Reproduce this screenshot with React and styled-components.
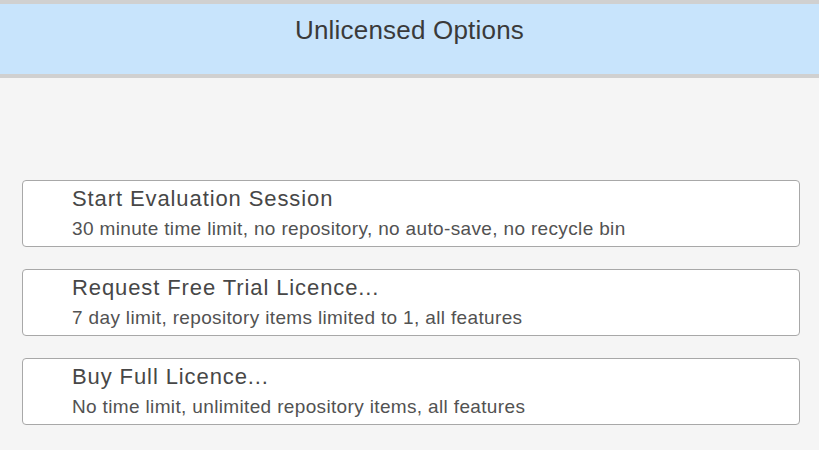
import styled, { createGlobalStyle } from 'styled-components'

const options = [
    { title: 'Start Evaluation Session', detail: '30 minute time limit, no repository, no auto-save, no recycle bin' },
    { title: 'Request Free Trial Licence...', detail: '7 day limit, repository items limited to 1, all features' },
    { title: 'Buy Full Licence...', detail: 'No time limit, unlimited repository items, all features' },
]

function App() {
    return (
        <>
            <GlobalStyle />
            <Page>
                <Header>Unlicensed Options</Header>
                <OptionList>
                    {options.map((option) => (
                        <OptionButton key={option.title} type='button'>
                            <OptionTitle>{option.title}</OptionTitle>
                            <OptionDetail>{option.detail}</OptionDetail>
                        </OptionButton>
                    ))}
                </OptionList>
            </Page>
        </>
    )
}

const GlobalStyle = createGlobalStyle`
    html, body {
        margin: 0;
        padding: 0;
        background: #f5f5f5;
        font-family: "Liberation Sans", Arial, sans-serif;
    }
`

const Page = styled.div`
    width: 819px;
    height: 450px;
    background: #f5f5f5;
    overflow: hidden;
`

const Header = styled.div`
    box-sizing: border-box;
    height: 78px;
    border-top: 4px solid #d0d0d0;
    border-bottom: 4px solid #d0d0d0;
    background: #c8e4fc;
    color: #3a3a3a;
    font-size: 26px;
    letter-spacing: 0.2px;
    line-height: 52px;
    text-align: center;
`

const OptionList = styled.div`
    display: flex;
    flex-direction: column;
    gap: 22px;
    padding: 102px 19px 0 22px;
`

const OptionButton = styled.button`
    box-sizing: border-box;
    display: flex;
    flex-direction: column;
    align-items: flex-start;
    height: 67px;
    padding: 6px 0 0 49px;
    background: #ffffff;
    border: 1px solid #a8a8a8;
    border-radius: 4px;
    font-family: "Liberation Sans", Arial, sans-serif;
    text-align: left;
    cursor: pointer;
`

const OptionTitle = styled.span`
    font-size: 22px;
    letter-spacing: 0.9px;
    line-height: 24px;
    color: #474747;
`

const OptionDetail = styled.span`
    margin-top: 7px;
    font-size: 19px;
    letter-spacing: 0.35px;
    line-height: 22px;
    color: #525252;
`

export default App
